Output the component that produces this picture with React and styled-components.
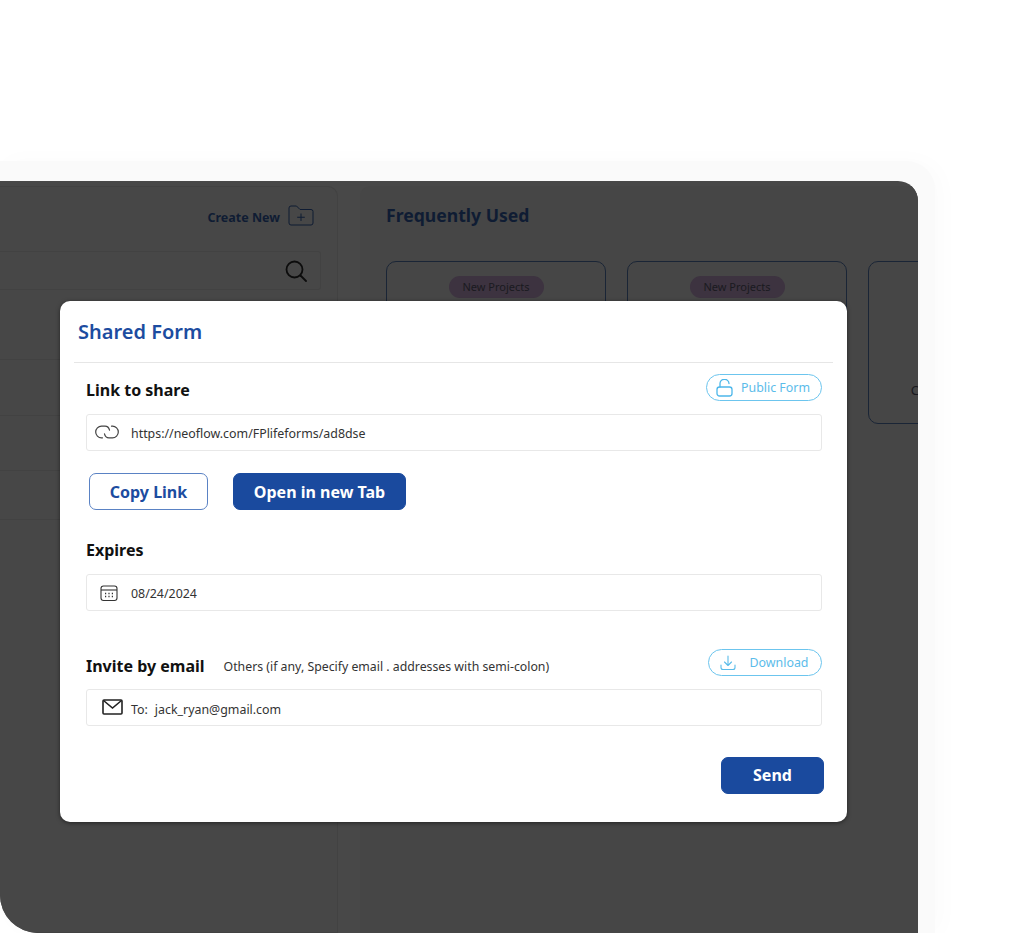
import styled, { createGlobalStyle } from 'styled-components'

const GlobalStyle = createGlobalStyle`
  html, body {
    margin: 0;
    padding: 0;
    height: 933px;
    overflow: hidden;
    background: #fff;
    font-family: 'Noto Sans', 'Open Sans', sans-serif;
  }
  * {
    box-sizing: border-box;
  }
`

const Stage = styled.div`
  height: 933px;
  padding-top: 161px;
  overflow: hidden;
`

const Frame = styled.div`
  width: 935px;
  height: 772px;
  padding: 20px 17px 0 0;
  background: #fafafa;
  border-radius: 0 28px 0 36px;
  box-shadow: 6px 0 24px rgba(0, 0, 0, 0.02);
`

const Panel = styled.div`
  position: relative;
  display: grid;
  grid-template-columns: 338px 1fr;
  column-gap: 22px;
  height: 100%;
  padding-top: 5px;
  overflow: hidden;
  background: #484848;
  border-radius: 0 20px 0 38px;
`

const LeftColumn = styled.section`
  background: #474747;
  border: 1px solid #424242;
  border-left: 0;
  border-radius: 0 10px 0 0;
  padding-top: 17px;
`

const CreateRow = styled.div`
  display: flex;
  justify-content: flex-end;
  align-items: center;
  gap: 8px;
  height: 26px;
  padding-right: 23px;
`

const CreateLabel = styled.span`
  font-size: 12.5px;
  font-weight: 700;
  color: #0f1c33;
`

const FolderSvg = styled.svg`
  margin-top: -3px;
`

const SearchBox = styled.div`
  display: flex;
  justify-content: flex-end;
  align-items: center;
  height: 39px;
  margin: 21px 16px 0 0;
  padding-right: 13px;
  border: 1px solid #424242;
  border-left: 0;
  border-radius: 0 3px 3px 0;
`

const ListRow = styled.div`
  height: ${(p) => p.$height}px;
  border-bottom: 1px solid #424242;
`

const RightColumn = styled.section`
  background: #464646;
  border-radius: 10px 0 0 0;
  padding: 17px 0 0 26px;
`

const SectionTitle = styled.h2`
  margin: 0;
  font-size: 17.6px;
  line-height: 25px;
  font-weight: 700;
  color: #0f1c33;
`

const CardRow = styled.div`
  display: flex;
  gap: 21px;
  margin-top: 33px;
`

const Card = styled.div`
  flex: 0 0 220px;
  height: 163px;
  padding-top: 12px;
  text-align: center;
  border: 1px solid #1a2536;
  border-radius: 10px;
`

const Pill = styled.span`
  display: inline-block;
  height: 22px;
  width: 95px;
  font-size: 11px;
  line-height: 22px;
  color: #1a1a1f;
  background: #3d3340;
  border-radius: 11px;
`

const CardText = styled.p`
  margin: 107px 0 0;
  font-size: 13px;
  line-height: 18px;
  color: #1a1a1f;
`

const Modal = styled.div`
  position: absolute;
  left: 60px;
  top: 120px;
  width: 787px;
  height: 521px;
  background: #fff;
  border-radius: 10px;
  box-shadow: 0 1px 4px rgba(0, 0, 0, 0.5);
`

const ModalHeader = styled.header`
  height: 62px;
  margin: 0 14px;
  padding: 17px 0 0 4px;
  border-bottom: 1px solid #e6e6e6;
`

const ModalTitle = styled.h1`
  margin: 0;
  font-size: 20px;
  line-height: 28px;
  font-weight: 600;
  color: #1c4ca0;
`

const ModalBody = styled.div`
  padding: 11px 25px 0 26px;
`

const FieldHead = styled.div`
  display: flex;
  align-items: center;
  height: 27px;
`

const FieldLabel = styled.h3`
  margin: ${(p) => (p.$drop || 0) * 2}px 0 0;
  font-size: 16px;
  font-weight: 700;
  color: #111;
`

const Hint = styled.span`
  margin-left: 19px;
  margin-top: 7px;
  font-size: 12.3px;
  color: #333;
`

const OutlinePill = styled.span`
  display: flex;
  align-items: center;
  justify-content: center;
  gap: ${(p) => p.$gap}px;
  width: ${(p) => p.$width}px;
  height: 27px;
  margin-left: auto;
  padding-right: 2px;
  font-size: 12.4px;
  color: #5bbcea;
  border: 1px solid #6cc5ee;
  border-radius: 14px;
`

const InputBox = styled.div`
  display: flex;
  align-items: center;
  height: 37px;
  margin-top: ${(p) => p.$top}px;
  padding: ${(p) => p.$textDrop}px 0 0 44px;
  position: relative;
  font-size: 12.4px;
  color: #333;
  border: 1px solid #e8e8e8;
  border-radius: 3px;
`

const InputIcon = styled.span`
  position: absolute;
  left: ${(p) => p.$left}px;
  top: ${(p) => p.$top}px;
  display: flex;
`

const Gap = styled.span`
  display: inline-block;
  width: 7px;
`

const ButtonRow = styled.div`
  display: flex;
  gap: 25px;
  margin: 22px 0 0 3px;
`

const Button = styled.button`
  width: ${(p) => p.$width}px;
  height: 37px;
  padding: 0 0 ${(p) => p.$lift || 0}px;
  font-family: inherit;
  font-size: 16px;
  font-weight: 700;
  color: ${(p) => (p.$primary ? '#fff' : '#1c4ca0')};
  background: ${(p) => (p.$primary ? '#1a4a9e' : '#fff')};
  border: 1px solid ${(p) => (p.$primary ? '#1a4a9e' : '#5a82c4')};
  border-radius: 7px;
`

const ExpiresHead = styled(FieldHead)`
  margin-top: 26px;
`

const InviteHead = styled(FieldHead)`
  margin-top: 38px;
`

const Footer = styled.div`
  display: flex;
  justify-content: flex-end;
  margin: 31px -2px 0 0;
`

function SearchIcon() {
  return (
    <svg width="22" height="22" viewBox="0 0 22 22" fill="none" stroke="#0c0c0c" strokeWidth="1.8" strokeLinecap="round">
      <circle cx="9.500" cy="9.500" r="8" />
      <path d="M15.500 15.500l5.500 5.500" />
    </svg>
  )
}

function FolderIcon() {
  return (
    <FolderSvg width="26" height="21" viewBox="0 0 26 21" fill="none" stroke="#0f1c33" strokeWidth="1">
      <path d="M1 18V3a2 2 0 0 1 2-2h5.500l3.500 3.500h11a2 2 0 0 1 2 2V18a2 2 0 0 1-2 2H3a2 2 0 0 1-2-2z" />
      <path d="M13 8.500v7.500M9.200 12.250h7.600" />
    </FolderSvg>
  )
}

function LockIcon() {
  return (
    <svg width="17" height="18" viewBox="0 0 17 18" fill="none" stroke="#4db7ea" strokeWidth="1.300">
      <rect x="1" y="8" width="15" height="9" rx="2.500" />
      <path d="M4 8V5a4.500 4.500 0 0 1 9-.5" strokeLinecap="round" />
    </svg>
  )
}

function DownloadIcon() {
  return (
    <svg width="16" height="16" viewBox="0 0 16 16" fill="none" stroke="#5bbcea" strokeWidth="1.100" strokeLinecap="round" strokeLinejoin="round">
      <path d="M8 1v9M4.500 7L8 10.500 11.500 7" />
      <path d="M1 10v2.500a2 2 0 0 0 2 2h10a2 2 0 0 0 2-2V10" />
    </svg>
  )
}

function LinkIcon() {
  return (
    <svg width="26" height="14" viewBox="0 0 26 14" fill="none" stroke="#444" strokeWidth="1.200" strokeLinecap="round">
      <path d="M8.500 12.800h-1a5.800 5.800 0 0 1 0-11.600H11c2.500 0 4 1.800 4.500 4" />
      <path d="M17.500 1.200h1a5.800 5.800 0 0 1 0 11.600H15c-2.500 0-4-1.800-4.500-4" />
    </svg>
  )
}

function CalendarIcon() {
  return (
    <svg width="18" height="18" viewBox="0 0 18 18" fill="none" stroke="#333" strokeWidth="1.100">
      <rect x="1" y="2" width="16" height="14.500" rx="2.500" />
      <path d="M1 6h16" />
      <path d="M5 9.500h1.200M8.400 9.500h1.200M11.800 9.500h1.200M5 12.500h1.200M8.400 12.500h1.200M11.800 12.500h1.200" strokeWidth="1.300" />
    </svg>
  )
}

function MailIcon() {
  return (
    <svg width="21" height="16" viewBox="0 0 21 16" fill="none" stroke="#222" strokeWidth="1.600">
      <rect x="1" y="1" width="19" height="14" rx="1" />
      <path d="M1.500 1.500L10.500 9l9-7.500" />
    </svg>
  )
}

function App() {
  return (
    <>
      <GlobalStyle />
      <Stage>
        <Frame>
          <Panel>
            <LeftColumn>
              <CreateRow>
                <CreateLabel>Create New</CreateLabel>
                <FolderIcon />
              </CreateRow>
              <SearchBox>
                <SearchIcon />
              </SearchBox>
              <ListRow $height={70} />
              <ListRow $height={56} />
              <ListRow $height={55} />
              <ListRow $height={49} />
            </LeftColumn>
            <RightColumn>
              <SectionTitle>Frequently Used</SectionTitle>
              <CardRow>
                <Card>
                  <Pill>New Projects</Pill>
                </Card>
                <Card>
                  <Pill>New Projects</Pill>
                </Card>
                <Card>
                  <CardText>Customer Order Form</CardText>
                </Card>
              </CardRow>
            </RightColumn>
            <Modal>
              <ModalHeader>
                <ModalTitle>Shared Form</ModalTitle>
              </ModalHeader>
              <ModalBody>
                <FieldHead>
                  <FieldLabel $drop={2}>Link to share</FieldLabel>
                  <OutlinePill $width={116} $gap={8}>
                    <LockIcon />
                    Public Form
                  </OutlinePill>
                </FieldHead>
                <InputBox $top={13} $textDrop={2}>
                  <InputIcon $left={7} $top={10}>
                    <LinkIcon />
                  </InputIcon>
                  https://neoflow.com/FPlifeforms/ad8dse
                </InputBox>
                <ButtonRow>
                  <Button $width={119}>Copy Link</Button>
                  <Button $width={173} $primary>
                    Open in new Tab
                  </Button>
                </ButtonRow>
                <ExpiresHead>
                  <FieldLabel>Expires</FieldLabel>
                </ExpiresHead>
                <InputBox $top={11} $textDrop={2}>
                  <InputIcon $left={13} $top={9}>
                    <CalendarIcon />
                  </InputIcon>
                  08/24/2024
                </InputBox>
                <InviteHead>
                  <FieldLabel $drop={3}>Invite by email</FieldLabel>
                  <Hint>Others (if any, Specify email . addresses with semi-colon)</Hint>
                  <OutlinePill $width={114} $gap={14}>
                    <DownloadIcon />
                    Download
                  </OutlinePill>
                </InviteHead>
                <InputBox $top={13} $textDrop={4}>
                  <InputIcon $left={15} $top={9}>
                    <MailIcon />
                  </InputIcon>
                  To:<Gap />jack_ryan@gmail.com
                </InputBox>
                <Footer>
                  <Button $width={103} $primary $lift={1}>
                    Send
                  </Button>
                </Footer>
              </ModalBody>
            </Modal>
          </Panel>
        </Frame>
      </Stage>
    </>
  )
}

export default App
